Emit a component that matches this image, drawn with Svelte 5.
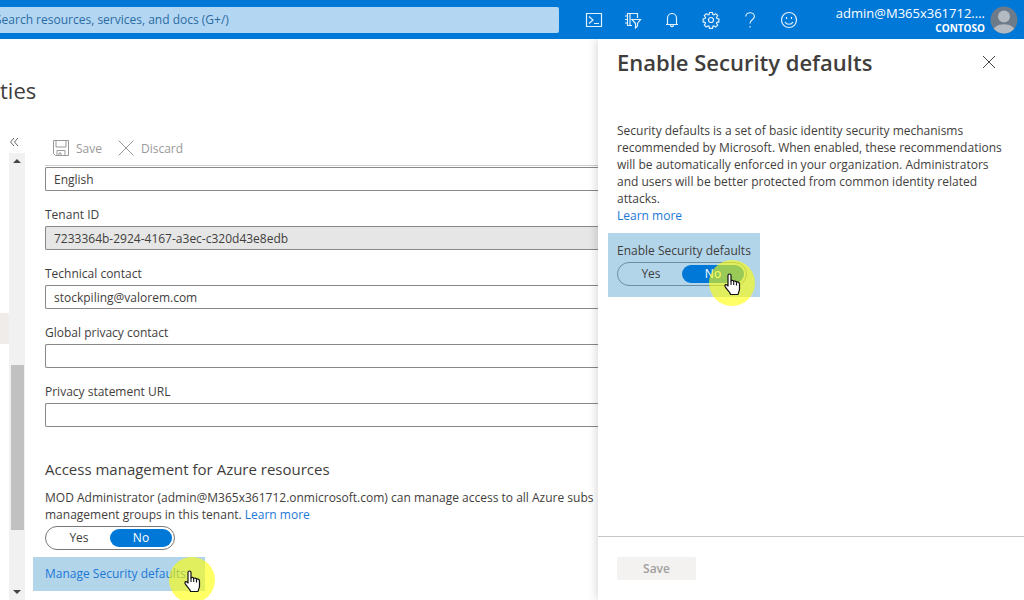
<script lang="ts">
    let fields = $state([
        { id: "tenant", label: "Tenant ID", value: "7233364b-2924-4167-a3ec-c320d43e8edb", locked: true },
        { id: "technical", label: "Technical contact", value: "stockpiling@valorem.com", locked: false },
        { id: "privacy", label: "Global privacy contact", value: "", locked: false },
        { id: "statement", label: "Privacy statement URL", value: "", locked: false }
    ]);

    let language = $state("English");
    let access = $state("No");
    let security = $state("No");
</script>

{#snippet hand()}
    <span class="pointer">
        <svg width="18" height="24" viewBox="0 0 18 24">
            <path d="M4 2.5C4 .5 7 .5 7 2.5V8c.5-.9 2.4-.8 2.7.5.6-.8 2.5-.6 2.8.8.7-.6 3-.4 3 1.7v5c0 2-1 3-1.500 5.500H6.500C6.500 19 2 16 1 13.200c-.5-1.700 1.400-2.400 3-.2z" fill="#fff" stroke="#111" stroke-width="1.2" stroke-linejoin="round"/>
            <path d="M7 8v4M9.700 8.500V12M12.500 9.500V12.500" stroke="#111" stroke-width="1.1"/>
        </svg>
    </span>
{/snippet}

<div class="page">
    <header>
        <input class="search" type="search" aria-label="Search" placeholder="Search resources, services, and docs (G+/)">
        <nav>
            <button type="button" aria-label="Cloud Shell">
                <svg width="18" height="18" viewBox="0 0 18 18"><path d="M1.500 2.500h15v13h-15zM4 5.500l4 3.500-4 3.500M9 12.500h5"/></svg>
            </button>
            <button type="button" aria-label="Directories and subscriptions">
                <svg width="18" height="18" viewBox="0 0 18 18"><path d="M8 14.500H3.500v-12h10V7M6 2.500v12M1 5h2.500M1 8.500h2.500M1 12h2.500M8 8.500h8.500l-3 4v2.500l-2 2v-4.500z"/></svg>
            </button>
            <button type="button" aria-label="Notifications">
                <svg width="18" height="18" viewBox="0 0 18 18"><path d="M4.500 13V7a4.500 4.500 0 0 1 9 0v6M3 13.500h12M7.500 14c0 2.200 3 2.200 3 0"/></svg>
            </button>
            <button type="button" aria-label="Settings">
                <svg width="18" height="18" viewBox="0 0 18 18"><path d="M7.500 1.500h3l.4 2 1 .4 1.800-1.200 2 2-1.200 1.800.4 1 2 .4v3l-2 .4-.4 1 1.200 1.800-2 2-1.800-1.200-1 .4-.4 2h-3l-.4-2-1-.4-1.800 1.200-2-2 1.200-1.800-.4-1-2-.4v-3l2-.4.4-1L2.300 4.700l2-2 1.800 1.200 1-.4z"/><circle cx="9" cy="9" r="2.500"/></svg>
            </button>
            <button type="button" aria-label="Help">
                <svg width="18" height="18" viewBox="0 0 18 18"><path d="M4.800 5.500c0-5 8.600-5 8.600 0C13.400 8.500 9 8.500 9 12.500M9 15v1.500"/></svg>
            </button>
            <button type="button" aria-label="Feedback">
                <svg width="18" height="18" viewBox="0 0 18 18"><circle cx="9" cy="9" r="7.500"/><path d="M6.500 6v2M11.500 6v2M5 11c1.500 3 6.500 3 8 0"/></svg>
            </button>
        </nav>
        <button class="account" type="button">
            <span class="who">
                <span>admin@M365x361712....</span>
                <b>CONTOSO</b>
            </span>
            <svg width="28" height="28" viewBox="0 0 28 28">
                <clipPath id="round"><circle cx="14" cy="14" r="13.500"/></clipPath>
                <g clip-path="url(#round)">
                    <path d="M0 0h28v28H0z" fill="#6c7a89"/>
                    <circle cx="14" cy="10.500" r="6" fill="#b4bac2"/>
                    <path d="M2 28c0-13 24-13 24 0z" fill="#b4bac2"/>
                </g>
            </svg>
        </button>
    </header>

    <div class="body">
        <main>
            <h1>ties</h1>
            <div class="columns">
                <aside>
                    <button class="collapse" type="button" aria-label="Collapse menu">
                        <svg width="10" height="10" viewBox="0 0 10 10"><path d="M5 1L1.500 5 5 9M9 1L5.500 5 9 9" fill="none" stroke="#666"/></svg>
                    </button>
                    <div class="menu">
                        <div class="current"></div>
                        <div class="scrollbar">
                            <i class="up"></i>
                            <div class="thumb"></div>
                            <i class="down"></i>
                        </div>
                    </div>
                </aside>

                <section>
                    <div class="toolbar">
                        <button type="button" disabled>
                            <svg width="16" height="16" viewBox="0 0 16 16"><path d="M.5.500h15v15H2.500l-2-2zM3 .5v6.500h10V.5M4 15.500v-5h8v5M6 15.500V13h2v2.500"/></svg>
                            Save
                        </button>
                        <button type="button" disabled>
                            <svg width="16" height="16" viewBox="0 0 16 16"><path d="M.5.500l15 15M15.500.500l-15 15"/></svg>
                            Discard
                        </button>
                    </div>

                    <div class="form">
                        <input type="text" aria-label="Notification language" bind:value={language}>
                        {#each fields as field (field.id)}
                            <label for={field.id}>{field.label}</label>
                            <input id={field.id} type="text" bind:value={field.value} readonly={field.locked}>
                        {/each}

                        <h2>Access management for Azure resources</h2>
                        <p class="access">
                            MOD Administrator (admin@M365x361712.onmicrosoft.com) can manage access to all Azure subs<br>
                            management groups in this tenant. <a href="#access">Learn more</a>
                        </p>
                        <div class="toggle" role="radiogroup" aria-label="Access management">
                            {#each ["Yes", "No"] as option (option)}
                                <label><input type="radio" name="access" value={option} bind:group={access}><span>{option}</span></label>
                            {/each}
                        </div>
                        <div class="mark manage">
                            <a href="#security">Manage Security defaults</a>
                            {@render hand()}
                        </div>
                    </div>
                </section>
            </div>
        </main>

        <div class="panel" role="dialog" aria-labelledby="panel-title">
            <div class="panel-head">
                <h2 id="panel-title">Enable Security defaults</h2>
                <button type="button" aria-label="Close">
                    <svg width="14" height="14" viewBox="0 0 14 14"><path d="M1 1l12 12M13 1L1 13" stroke="#444"/></svg>
                </button>
            </div>
            <div class="panel-body">
                <p>
                    Security defaults is a set of basic identity security mechanisms recommended by Microsoft. When enabled, these recommendations will be automatically enforced in your organization. Administrators and users will be better protected from common identity related attacks.
                </p>
                <a href="#defaults">Learn more</a>
                <div class="mark enable">
                    <span id="enable-label">Enable Security defaults</span>
                    <div class="toggle" role="radiogroup" aria-labelledby="enable-label">
                        {#each ["Yes", "No"] as option (option)}
                            <label><input type="radio" name="security" value={option} bind:group={security}><span>{option}</span></label>
                        {/each}
                    </div>
                    {@render hand()}
                </div>
            </div>
            <footer>
                <button type="button" disabled>Save</button>
            </footer>
        </div>
    </div>
</div>

<style>
    :global(body) {
        margin: 0;
    }

    .page {
        display: flex;
        flex-direction: column;
        height: 100vh;
        overflow: hidden;
        background: #fff;
        color: #3f3e3d;
        font: 12px/17px "Open Sans", "Noto Sans", sans-serif;
    }

    .page * {
        box-sizing: border-box;
    }

    button, input {
        font: inherit;
        color: inherit;
    }

    button {
        display: flex;
        align-items: center;
        border: 0;
        padding: 0;
        background: none;
    }

    a {
        color: #1b78d6;
        text-decoration: none;
    }

    h1, h2, p {
        margin: 0;
    }

    header {
        display: flex;
        align-items: center;
        flex: none;
        height: 39px;
        background: #0078d7;
        color: #fff;
    }

    .search {
        flex: 1;
        min-width: 0;
        height: 26px;
        margin-left: -20px;
        padding: 0 15px;
        border: 0;
        border-radius: 2px;
        background: #b3d6f2;
    }

    .search::placeholder {
        color: #2b6ca3;
        opacity: 1;
    }

    nav {
        display: flex;
        gap: 21px;
        margin: 0 38px 0 26px;
    }

    nav svg {
        fill: none;
        stroke: #e3f1fc;
        stroke-width: 1.2;
    }

    .account {
        gap: 5px;
        margin-right: 6px;
    }

    .who {
        display: flex;
        flex-direction: column;
        align-items: flex-end;
        font-size: 13px;
        line-height: 16px;
    }

    .who b {
        font-size: 10px;
        line-height: 14px;
    }

    .body {
        display: flex;
        flex: 1;
        min-height: 0;
    }

    main {
        display: flex;
        flex-direction: column;
        flex: 1;
        min-width: 0;
    }

    h1 {
        padding: 37px 0 27px;
        font-size: 22px;
        line-height: 28px;
        font-weight: 400;
    }

    .columns {
        display: flex;
        flex: 1;
        min-height: 0;
    }

    aside {
        display: flex;
        flex-direction: column;
        flex: none;
        width: 25px;
    }

    .collapse {
        height: 22px;
        padding-left: 9px;
    }

    .menu {
        display: flex;
        flex: 1;
    }

    .current {
        width: 9px;
        height: 31px;
        margin-top: 160px;
        background: #f0ecea;
    }

    .scrollbar {
        display: flex;
        flex-direction: column;
        align-items: center;
        justify-content: space-between;
        flex: 1;
        padding: 6px 0;
        background: #f1f1f1;
    }

    .scrollbar i {
        border: 4px solid transparent;
    }

    .scrollbar .up {
        border-top: 0;
        border-bottom-color: #444;
    }

    .scrollbar .down {
        border-bottom: 0;
        border-top-color: #444;
    }

    .thumb {
        width: 13px;
        height: 38%;
        margin: 202px 0 auto;
        background: #c1c1c1;
    }

    section {
        flex: 1;
        min-width: 0;
        padding-left: 20px;
    }

    .toolbar {
        display: flex;
        gap: 16px;
        height: 35px;
        padding-left: 8px;
        border-bottom: 1px solid #ccc;
    }

    .toolbar button {
        gap: 7px;
        color: #999;
    }

    .toolbar svg {
        fill: none;
        stroke: #999;
    }

    .form {
        padding-top: 1px;
    }

    .form > label {
        display: block;
        margin: 15px 0 3px;
        line-height: 17px;
    }

    input[type="text"] {
        display: block;
        width: 100%;
        height: 24px;
        padding: 0 8px;
        border: 1px solid #8a8886;
        border-right: 0;
        border-radius: 2px 0 0 2px;
        background: #fff;
    }

    input[readonly] {
        background: #e6e6e6;
    }

    .form h2 {
        margin: 32px 0 10px;
        font-size: 15px;
        line-height: 20px;
        font-weight: 400;
    }

    .access {
        white-space: nowrap;
    }

    .toggle {
        display: flex;
        width: 130px;
        height: 24px;
        margin-top: 3px;
        padding: 2px;
        border: 1px solid #777;
        border-radius: 12px;
    }

    .toggle label {
        flex: 1;
        text-align: center;
    }

    .toggle input {
        appearance: none;
        position: absolute;
        margin: 0;
    }

    .toggle span {
        display: block;
        line-height: 18px;
        border-radius: 9px;
    }

    .toggle input:checked + span {
        background: #0078d7;
        color: #fff;
    }

    .mark {
        position: relative;
        width: max-content;
        background: #b3d5ea;
    }

    .manage {
        margin: 7px 0 0 -12px;
        padding: 8px 19px 9px 12px;
    }

    .enable {
        margin: 9px 0 0 -9px;
        padding: 9px 9px 11px;
    }

    .enable .toggle {
        border-color: #6d8da5;
    }

    /* click highlight around the cursor */
    .pointer {
        display: flex;
        align-items: center;
        justify-content: center;
        position: absolute;
        right: -10px;
        bottom: -12px;
        width: 46px;
        height: 46px;
        padding: 3px 0 0 2px;
        border-radius: 50%;
        background: rgba(255, 255, 0, .6);
    }

    .enable .pointer {
        right: 5px;
        bottom: -9px;
    }

    .panel {
        display: flex;
        flex-direction: column;
        flex: none;
        width: 426px;
        background: #fff;
        box-shadow: 0 0 10px rgba(0, 0, 0, .2);
        clip-path: inset(0 0 0 -12px);
        z-index: 1;
    }

    .panel-head {
        display: flex;
        align-items: center;
        justify-content: space-between;
        padding: 8px 28px 0 19px;
    }

    .panel-head h2 {
        font-size: 22px;
        line-height: 30px;
        font-weight: 600;
    }

    .panel-body {
        flex: 1;
        padding: 45px 16px 0 19px;
    }

    footer {
        padding: 20px 19px;
        border-top: 1px solid #c8c6c4;
    }

    footer button {
        justify-content: center;
        width: 79px;
        height: 23px;
        border-radius: 2px;
        background: #f3f2f1;
        color: #a19f9d;
        font-weight: 600;
    }
</style>
